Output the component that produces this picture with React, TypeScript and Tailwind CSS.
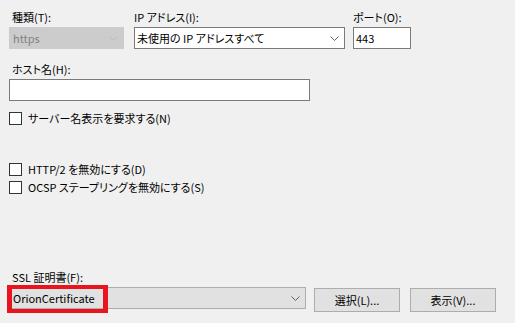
import React from "react";

const font = { fontFamily: '"Noto Sans CJK JP", "Noto Sans", sans-serif' };

const Chevron = ({ color }: { color: string }) => (
  <svg width="9" height="5" viewBox="0 0 9 5" className="shrink-0">
    <path d="M0.5 0.5 L4.5 4.5 L8.5 0.5" fill="none" stroke={color} strokeWidth="1" />
  </svg>
);

const Label = ({ children, pad = true }: { children: React.ReactNode; pad?: boolean }) => (
  <div className={`h-[18px] text-[11px] leading-[16px] text-black whitespace-nowrap ${pad ? "pl-[3px]" : ""}`}>
    {children}
  </div>
);

const Check = ({ text }: { text: string }) => (
  <div className="flex items-center h-[13px] gap-[6px]">
    <div className="w-[13px] h-[13px] border border-[#333] bg-white shrink-0" />
    <span className="text-[11px] leading-[13px] text-black whitespace-nowrap">{text}</span>
  </div>
);

export default function App() {
  return (
    <div
      className="w-[515px] h-[323px] bg-[#f0f0f0] pl-[9px] pt-[9px] flex flex-col [font-feature-settings:'palt']"
      style={font}
    >
      <div className="flex">
        <div className="w-[115px]">
          <Label>種類(T):</Label>
          <div className="h-[22px] bg-[#cccccc] border border-[#cccccc] flex items-center justify-between pl-[3px] pr-[5px]">
            <span className="text-[11px] text-[#838383]">https</span>
            <Chevron color="#bdbdbd" />
          </div>
        </div>
        <div className="w-[211px] ml-[10px]">
          <Label pad={false}>IP アドレス(I):</Label>
          <div className="h-[22px] bg-white border border-[#7a7a7a] flex items-center justify-between pl-[2px] pr-[5px]">
            <span className="text-[11px] text-black whitespace-nowrap">未使用の IP アドレスすべて</span>
            <Chevron color="#606060" />
          </div>
        </div>
        <div className="w-[58px] ml-[8px]">
          <Label pad={false}>ポート(O):</Label>
          <div className="h-[22px] bg-white border border-[#7a7a7a] flex items-center pl-[2px]">
            <span className="text-[11px] text-black">443</span>
          </div>
        </div>
      </div>

      <div className="mt-[12px]">
        <Label>ホスト名(H):</Label>
        <div className="w-[301px] h-[22px] bg-white border border-[#7a7a7a]" />
      </div>

      <div className="mt-[11px]">
        <Check text="サーバー名表示を要求する(N)" />
      </div>

      <div className="mt-[38px] flex flex-col gap-[5px]">
        <Check text="HTTP/2 を無効にする(D)" />
        <Check text="OCSP ステープリングを無効にする(S)" />
      </div>

      <div className="mt-[75px]">
        <Label>SSL 証明書(F):</Label>
        <div className="flex items-start">
          <div className="relative w-[297px] h-[22px] bg-[#e1e1e1] border border-[#adadad] flex items-center justify-between pl-[3px] pr-[5px]">
            <span className="text-[11px] text-black">OrionCertificate</span>
            <Chevron color="#606060" />
            <div className="absolute left-[-3px] top-[-3px] w-[101px] h-[28px] border-[4px] border-x-[5px] border-[#e8141e]" />
          </div>
          <button className="ml-[8px] mt-[1px] w-[86px] h-[24px] bg-[#e1e1e1] border border-[#adadad] text-[11px] text-black">
            選択(L)...
          </button>
          <button className="ml-[10px] mt-[1px] w-[86px] h-[24px] bg-[#e1e1e1] border border-[#adadad] text-[11px] text-black">
            表示(V)...
          </button>
        </div>
      </div>
    </div>
  );
}
